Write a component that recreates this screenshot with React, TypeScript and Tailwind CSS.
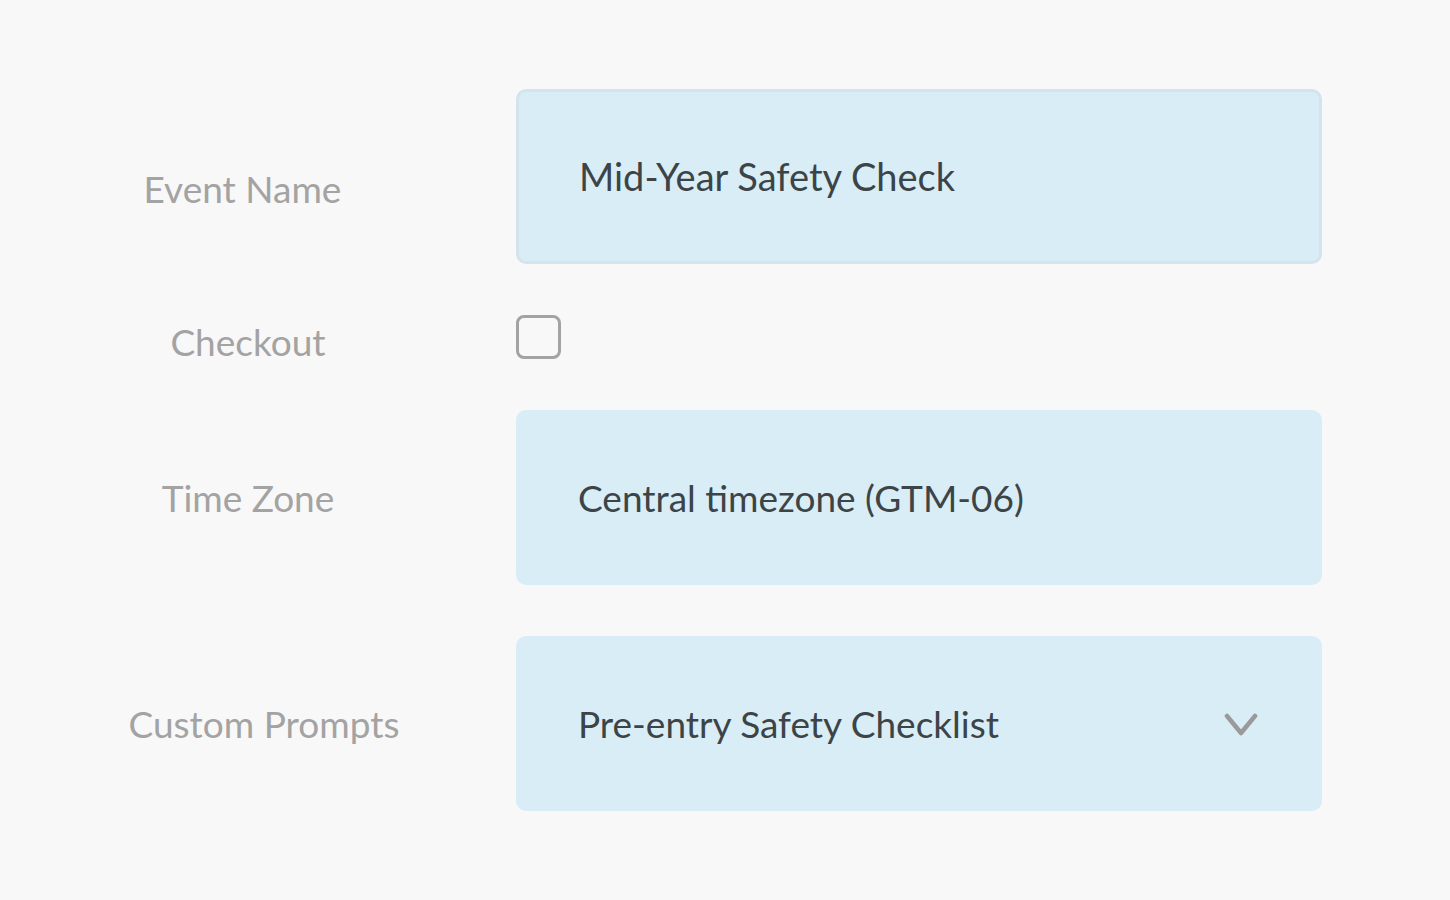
import React from 'react'

const font = { fontFamily: 'Lato, "Noto Sans", sans-serif' }

export default function App() {
  return (
    <div className="w-full h-[900px] bg-[#f8f8f8] pt-[89px]" style={font}>
      <div className="grid grid-cols-[516px_806px] gap-y-[51px]">
        {/* Event Name */}
        <div className="flex items-center justify-center w-[496px] pt-[25px] pr-[11px] text-[37px] text-[#a3a3a3]">
          Event Name
        </div>
        <div className="h-[175px] rounded-[10px] bg-[#d9edf6] border-[3px] border-[#d3e4ec] flex items-center pl-[60px] text-[38px] text-[#3c4448]">
          Mid-Year Safety Check
        </div>

        {/* Checkout */}
        <div className="h-[44px] w-[496px] pt-[5px] text-center leading-[44px] text-[37px] text-[#a3a3a3]">
          Checkout
        </div>
        <div className="flex items-center h-[44px]">
          <div className="w-[45px] h-[44px] rounded-[8px] border-[3px] border-[#a3a3a3]" />
        </div>

        {/* Time Zone */}
        <div className="flex items-center justify-center w-[496px] text-[37px] text-[#a3a3a3]">
          Time Zone
        </div>
        <div className="h-[175px] rounded-[10px] bg-[#d9edf6] flex items-center pl-[62px] text-[37px] text-[#3c4448]">
          Central timezone (GTM-06)
        </div>

        {/* Custom Prompts */}
        <div className="flex items-center justify-center w-[496px] pl-[32px] text-[37px] text-[#a3a3a3]">
          Custom Prompts
        </div>
        <div className="h-[175px] rounded-[10px] bg-[#d9edf6] flex items-center justify-between pl-[62px] pr-[64px] text-[37px] text-[#3c4448]">
          <span>Pre-entry Safety Checklist</span>
          <svg width="34" height="24" viewBox="0 0 34 24" fill="none" className="mt-[2px]">
            <path d="M3 3 L17 20 L31 3" stroke="#9a9a9a" strokeWidth="4.5" strokeLinecap="round" strokeLinejoin="round" />
          </svg>
        </div>
      </div>
    </div>
  )
}
